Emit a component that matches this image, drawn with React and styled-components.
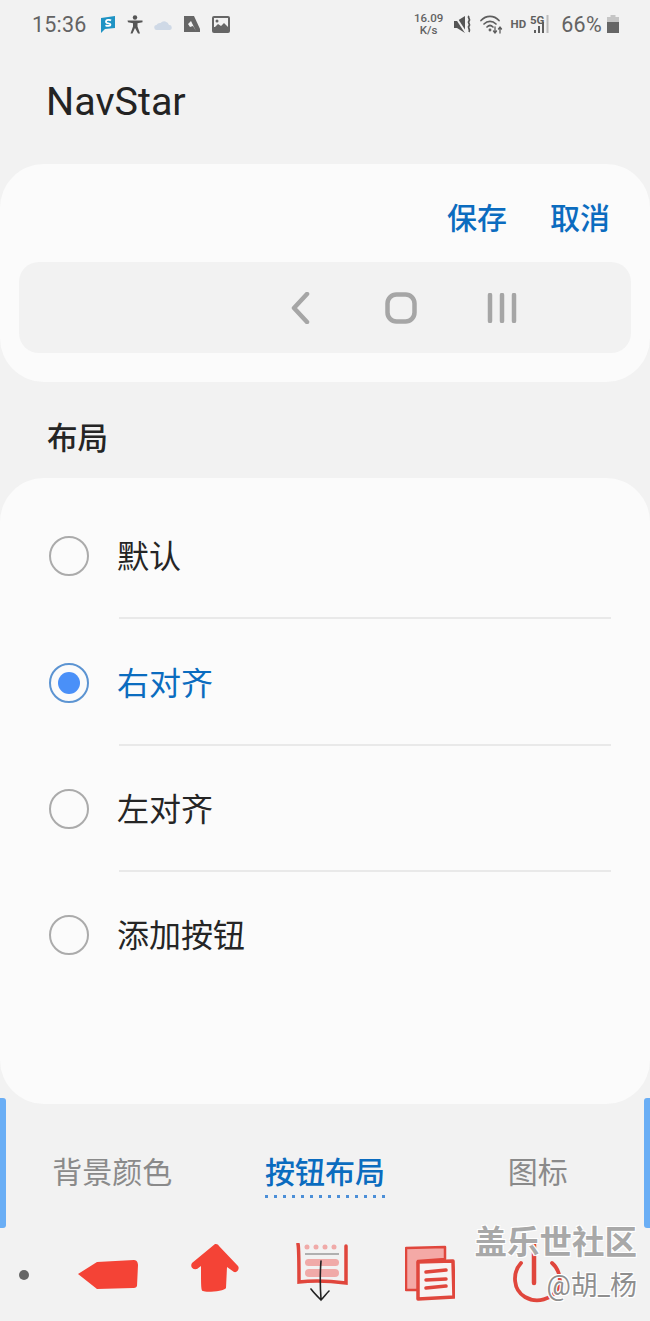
import React from 'react';
import styled, { createGlobalStyle } from 'styled-components';

const GlobalStyle = createGlobalStyle`
  * {
    margin: 0;
    padding: 0;
    box-sizing: border-box;
  }

  body {
    font-family: Roboto, 'Noto Sans CJK SC', sans-serif;
    background: #f2f2f2;
    color: #252525;
    width: 650px;
    height: 1321px;
    overflow: hidden;
  }
`;

const Screen = styled.div`
  position: relative;
  width: 650px;
  height: 1321px;
  display: flex;
  flex-direction: column;
`;

const StatusBar = styled.div`
  height: 48px;
  padding: 0 31px 0 32px;
  display: flex;
  align-items: center;
  justify-content: space-between;
  color: #636363;
`;

const StatusGroup = styled.div`
  display: flex;
  align-items: center;
  gap: ${(p) => p.$gap}px;
`;

const Clock = styled.span`
  font-size: 21.5px;
  letter-spacing: 0.2px;
  margin-right: 2px;
`;

const Speed = styled.span`
  font-size: 11.5px;
  font-weight: 500;
  line-height: 12.5px;
  text-align: center;
  width: 30px;
  margin-right: 3px;
`;

const Hd = styled.span`
  font-size: 11.5px;
  font-weight: 700;
  margin-right: -3px;
`;

const Percent = styled.span`
  font-size: 21.5px;
  margin-left: 4px;
  margin-right: -2px;
  letter-spacing: 0.3px;
`;

const Title = styled.h1`
  height: 116px;
  padding: 31px 0 0 46px;
  font-size: 39.5px;
  line-height: 46px;
  font-weight: 400;
  color: #232323;
`;

const Card = styled.section`
  background: #fbfbfb;
  border-radius: 44px;
`;

const PreviewCard = styled(Card)`
  height: 218px;
  padding: 0 19px 29px;
  display: flex;
  flex-direction: column;
`;

const Actions = styled.div`
  height: 98px;
  padding: 12px 21px 0 0;
  display: flex;
  align-items: center;
  justify-content: flex-end;
  gap: 43px;
`;

const ActionButton = styled.button`
  border: none;
  background: none;
  font-family: inherit;
  font-size: 30px;
  font-weight: 500;
  line-height: 40px;
  color: #0b6cbf;
`;

const NavPreview = styled.div`
  flex: 1;
  background: #f2f2f2;
  border-radius: 20px;
  display: grid;
  grid-template-columns: 101px 101px 101px;
  justify-content: end;
  align-items: center;
  justify-items: center;
  padding-right: 79px;
`;

const SectionLabel = styled.h2`
  height: 96px;
  padding: 37px 0 0 47px;
  font-size: 30.5px;
  line-height: 40px;
  font-weight: 500;
  color: #252525;
`;

const OptionsCard = styled(Card)`
  height: 626px;
  padding-top: 15px;
`;

const Option = styled.div`
  height: 126.4px;
  padding-left: 49px;
  display: flex;
  align-items: center;
  gap: 28px;
  position: relative;

  &:not(:last-child)::after {
    content: '';
    position: absolute;
    left: 119px;
    right: 39px;
    bottom: 0;
    height: 2px;
    background: #e9e9e9;
  }
`;

const Radio = styled.span`
  width: 40px;
  height: 40px;
  border-radius: 50%;
  border: 2px solid ${(p) => (p.$on ? '#5c94d2' : '#ababab')};
  display: flex;
  align-items: center;
  justify-content: center;

  &::before {
    content: '';
    display: ${(p) => (p.$on ? 'block' : 'none')};
    width: 22px;
    height: 22px;
    border-radius: 50%;
    background: #4a90f8;
  }
`;

const OptionText = styled.span`
  font-size: 32px;
  line-height: 44px;
  padding-top: 2px;
  color: ${(p) => (p.$on ? '#0b6cbf' : '#252525')};
`;

const Tabs = styled.nav`
  height: 125px;
  padding: 12px 6px 0;
  display: grid;
  grid-template-columns: repeat(3, 1fr);
  justify-items: center;
  align-items: center;
`;

const Tab = styled.span`
  font-size: 30px;
  line-height: 40px;
  font-weight: ${(p) => (p.$on ? 500 : 400)};
  color: ${(p) => (p.$on ? '#0b6cbf' : '#8a8a8a')};
  position: relative;

  &::after {
    content: '';
    display: ${(p) => (p.$on ? 'block' : 'none')};
    position: absolute;
    left: 0;
    right: 0;
    bottom: -5px;
    height: 3px;
    background: radial-gradient(circle at 1.5px 1.5px, #4c8fd8 1.5px, transparent 1.7px) 0 0 / 9px 3px repeat-x;
  }
`;

const BottomBar = styled.div`
  flex: 1;
  display: grid;
  grid-template-columns: 54px repeat(5, 107.5px);
  align-items: start;
  justify-items: center;
`;

const Dot = styled.span`
  width: 10px;
  height: 10px;
  margin-top: 41px;
  margin-left: -6px;
  border-radius: 50%;
  background: #666;
`;

const NavIcon = styled.svg`
  display: block;
  margin-top: ${(p) => p.$top}px;
`;

const SideHandle = styled.div`
  position: absolute;
  top: 1098px;
  ${(p) => (p.$right ? 'right: 0;' : 'left: 0;')}
  width: 6px;
  height: 130px;
  background: #6aaef5;
  border-radius: ${(p) => (p.$right ? '3px 0 0 3px' : '0 3px 3px 0')};
`;

const Watermark = styled.div`
  position: absolute;
  right: 13px;
  top: 1223px;
  text-align: right;
  color: #8f8f8f;
  text-shadow: 1px 1px 0 #fff, -1px -1px 0 #fff, 1px -1px 0 #fff, -1px 1px 0 #fff;
`;

const WatermarkBrand = styled.div`
  font-size: 32.5px;
  line-height: 40px;
  font-weight: 700;
  color: #a8a8a8;
`;

const WatermarkUser = styled.div`
  font-size: 27px;
  line-height: 30px;
  margin-top: 8px;
`;

const StatusIcons = {
  S: () => (
    <svg width="16" height="19" viewBox="0 0 16 19">
      <path d="M1 3l14-2v12l-10 1-4 4z" fill="#1f93c4" />
      <path d="M11 5.500c-1-1-5-1-5 1.200 0 2.300 4.500 1 4.500 3 0 1.500-3.500 1.500-5 .5" fill="none" stroke="#fff" strokeWidth="1.800" />
    </svg>
  ),
  Person: () => (
    <svg width="16" height="19" viewBox="0 0 16 19" fill="#555">
      <circle cx="8" cy="2.500" r="2.200" />
      <path d="M0.500 5.500h15v1.700l-5 1v3.300l2.500 7h-2L8 13l-2.500 5.500h-2l2.500-7V8.200l-5-1z" />
    </svg>
  ),
  Cloud: () => (
    <svg width="18" height="13" viewBox="0 0 18 13">
      <path d="M3 12a2.500 2.500 0 0 1-.5-5 4 4 0 0 1 4-2 5 5 0 0 1 8.500 2 2.500 2.500 0 0 1 .5 5z" fill="#cfd9e6" />
    </svg>
  ),
  Doc: () => (
    <svg width="18" height="18" viewBox="0 0 18 18">
      <path d="M1 1h10l6 13v3H1z" fill="#666" />
      <path d="M5 9l3-3 5 10-3-5-3 1z" fill="#f2f2f2" />
    </svg>
  ),
  Image: () => (
    <svg width="18" height="17" viewBox="0 0 18 17">
      <rect width="18" height="17" rx="2" fill="#666" />
      <rect x="2" y="2" width="14" height="9" fill="#f2f2f2" />
      <circle cx="5" cy="5" r="1.500" fill="#666" />
      <path d="M2 12l4-4 3 2 3-3 4 4v3H2z" fill="#666" />
    </svg>
  ),
  Mute: () => (
    <svg width="19" height="19" viewBox="0 0 19 19">
      <path d="M0 6h3l8-5v17l-8-5H0z" fill="#555" />
      <path d="M1 1l11 17" stroke="#f2f2f2" strokeWidth="2" />
      <path d="M15 1c-2 2 2 3 0 5s2 3 0 5 2 3 0 6" fill="none" stroke="#555" strokeWidth="1.800" />
    </svg>
  ),
  Wifi: () => (
    <svg width="24" height="20" viewBox="0 0 24 20" fill="none" stroke="#5e5e5e" strokeWidth="1.700" strokeLinecap="round">
      <path d="M1 6.500c5-5.500 13-5.500 18 0" />
      <path d="M4 10c3.500-3.500 8.500-3.500 12 0" />
      <path d="M7 13c2-2 4-2 6 0" />
      <circle cx="10" cy="16" r=".6" />
      <path d="M15 13v6M13.500 17l1.500 2 1.500-2M20 19v-6M18.500 15l1.500-2 1.500 2" strokeWidth="1.300" />
    </svg>
  ),
  Signal: () => (
    <svg width="20" height="20" viewBox="0 0 20 20">
      <path d="M4 16h2v3H4zM8 12h2v7H8zM12 8h2v11h-2z" fill="#5e5e5e" />
      <path d="M16.500 1h2v18h-2z" fill="#bdbdbd" />
      <text x="0" y="10" fontSize="11.500" fontWeight="700" fontFamily="Roboto, sans-serif" fill="#5e5e5e">5G</text>
    </svg>
  ),
  Battery: () => (
    <svg width="12" height="18" viewBox="0 0 12 18">
      <path d="M3.500 0h5v2H12v16H0V2h3.500z" fill="#c5c5c5" />
      <path d="M0 7h12v11H0z" fill="#666" />
    </svg>
  ),
};

function BackGlyph() {
  return (
    <svg width="24" height="32" viewBox="0 0 24 32" fill="none" stroke="#a6a6a6" strokeWidth="4.500" strokeLinecap="round" strokeLinejoin="round">
      <path d="M19 2L6 16l13 14" />
    </svg>
  );
}

function HomeGlyph() {
  return (
    <svg width="32" height="32" viewBox="0 0 32 32" fill="none" stroke="#a6a6a6" strokeWidth="4.500">
      <rect x="2.500" y="2.500" width="27" height="27" rx="9" />
    </svg>
  );
}

function RecentsGlyph() {
  return (
    <svg width="30" height="30" viewBox="0 0 30 30" fill="none" stroke="#a6a6a6" strokeWidth="4.500" strokeLinecap="round">
      <path d="M3 2v26M15 2v26M27 2v26" />
    </svg>
  );
}

function ArrowLeftSketch() {
  return (
    <NavIcon $top={25} width="62" height="40" viewBox="0 0 62 40">
      <path d="M1 20L20 8l37-2c3 0 4 3 4 5l-1 21c-1 2-3 2-4 2l-36 1z" fill="#f44336" />
    </NavIcon>
  );
}

function ArrowUpSketch() {
  return (
    <NavIcon $top={14} width="48" height="52" viewBox="-1 0 48 52">
      <path d="M23 1c1 0 3 0 4 2l19 20c2 3-1 7-4 6l-7-5-1 21c-1 3-20 5-23 3-2 0-2-5-2-25l-4 3c-5 1-7-3-5-6z" fill="#f44336" />
    </NavIcon>
  );
}

function SaveSketch() {
  return (
    <NavIcon $top={14} width="54" height="60" viewBox="0 0 54 60">
      <path d="M2 1c1 4 1 26 1 38 16-2 32-1 47 1V3" fill="none" stroke="#e0463c" strokeWidth="3.500" strokeLinecap="round" />
      <g fill="#f0aaa8">
        <circle cx="11" cy="4" r="2.500" />
        <circle cx="20" cy="4" r="2.500" />
        <circle cx="29" cy="4" r="2.500" />
        <circle cx="38" cy="4" r="2.500" />
        <rect x="9" y="16" width="34" height="7" rx="3.500" />
        <rect x="9" y="26" width="34" height="8" rx="4" />
      </g>
      <path d="M9 11h34" stroke="#9a9a9a" strokeWidth="1.500" />
      <path d="M25 18c-1 12-1 24 0 38M15 46c3 4 7 8 10 11 3-3 5-6 8-9" fill="none" stroke="#222" strokeWidth="1.600" strokeLinecap="round" />
    </NavIcon>
  );
}

function CopySketch() {
  return (
    <NavIcon $top={16} width="50" height="56" viewBox="0 0 50 56">
      <path d="M1 3l39-1v12l-27 2 1 29H1z" fill="#f4a9a6" stroke="#e0463c" strokeWidth="2.500" strokeLinejoin="round" />
      <path d="M13 17l35-1 1 36-36 2z" fill="#f7f3f3" stroke="#e0463c" strokeWidth="3.500" strokeLinejoin="round" />
      <path d="M21 27l20-2M21 35l20-1M21 43l20-2" stroke="#e0463c" strokeWidth="3.500" strokeLinecap="round" />
    </NavIcon>
  );
}

function PowerSketch() {
  return (
    <NavIcon $top={14} width="52" height="62" viewBox="0 0 52 62">
      <path d="M9 20C0 30 1 47 13 54c12 7 27 2 33-8 4-9 1-20-6-26" fill="none" stroke="#e0463c" strokeWidth="3.800" strokeLinecap="round" />
      <path d="M22 2v38" stroke="#e0463c" strokeWidth="4.500" strokeLinecap="round" />
    </NavIcon>
  );
}

const options = [
  { label: '默认' },
  { label: '右对齐', selected: true },
  { label: '左对齐' },
  { label: '添加按钮' },
];

const tabs = [
  { label: '背景颜色' },
  { label: '按钮布局', active: true },
  { label: '图标' },
];

export default function App() {
  return (
    <>
      <GlobalStyle />
      <Screen>
        <StatusBar>
          <StatusGroup $gap={11}>
            <Clock>15:36</Clock>
            <StatusIcons.S />
            <StatusIcons.Person />
            <StatusIcons.Cloud />
            <StatusIcons.Doc />
            <StatusIcons.Image />
          </StatusGroup>
          <StatusGroup $gap={7}>
            <Speed>16.09<br />K/s</Speed>
            <StatusIcons.Mute />
            <StatusIcons.Wifi />
            <Hd>HD</Hd>
            <StatusIcons.Signal />
            <Percent>66%</Percent>
            <StatusIcons.Battery />
          </StatusGroup>
        </StatusBar>

        <Title>NavStar</Title>

        <PreviewCard>
          <Actions>
            <ActionButton>保存</ActionButton>
            <ActionButton>取消</ActionButton>
          </Actions>
          <NavPreview>
            <BackGlyph />
            <HomeGlyph />
            <RecentsGlyph />
          </NavPreview>
        </PreviewCard>

        <SectionLabel>布局</SectionLabel>

        <OptionsCard>
          {options.map((o) => (
            <Option key={o.label}>
              <Radio $on={o.selected} />
              <OptionText $on={o.selected}>{o.label}</OptionText>
            </Option>
          ))}
        </OptionsCard>

        <Tabs>
          {tabs.map((t) => (
            <Tab key={t.label} $on={t.active}>{t.label}</Tab>
          ))}
        </Tabs>

        <BottomBar>
          <Dot />
          <ArrowLeftSketch />
          <ArrowUpSketch />
          <SaveSketch />
          <CopySketch />
          <PowerSketch />
        </BottomBar>

        <SideHandle />
        <SideHandle $right />
        <Watermark>
          <WatermarkBrand>盖乐世社区</WatermarkBrand>
          <WatermarkUser>@胡_杨</WatermarkUser>
        </Watermark>
      </Screen>
    </>
  );
}
